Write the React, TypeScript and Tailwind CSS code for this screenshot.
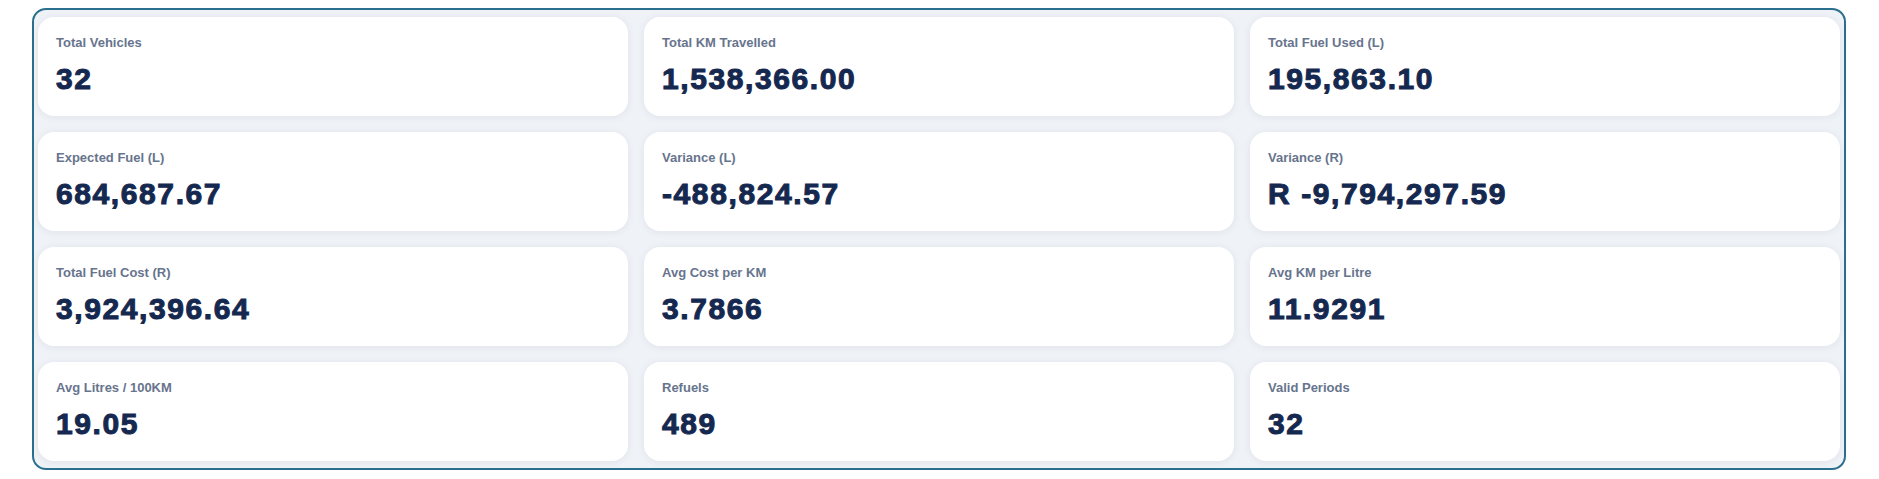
import React from 'react';

interface Stat {
  label: string;
  value: string;
}

const stats: Stat[] = [
  { label: 'Total Vehicles', value: '32' },
  { label: 'Total KM Travelled', value: '1,538,366.00' },
  { label: 'Total Fuel Used (L)', value: '195,863.10' },
  { label: 'Expected Fuel (L)', value: '684,687.67' },
  { label: 'Variance (L)', value: '-488,824.57' },
  { label: 'Variance (R)', value: 'R -9,794,297.59' },
  { label: 'Total Fuel Cost (R)', value: '3,924,396.64' },
  { label: 'Avg Cost per KM', value: '3.7866' },
  { label: 'Avg KM per Litre', value: '11.9291' },
  { label: 'Avg Litres / 100KM', value: '19.05' },
  { label: 'Refuels', value: '489' },
  { label: 'Valid Periods', value: '32' },
];

const StatCard: React.FC<Stat> = ({ label, value }) => (
  <div className="bg-white rounded-2xl h-[99px] pl-[18px] pr-4 pt-[17px] pb-[19px] shadow-[0_1px_8px_rgba(30,41,59,0.07)]">
    <div className="text-[13px] leading-[18px] font-semibold text-[#67748d]">{label}</div>
    <div className="mt-[9px] text-[30px] leading-9 font-bold text-[#15284f] tracking-[1.6px] [-webkit-text-stroke:1px_#15284f]">
      {value}
    </div>
  </div>
);

export default function App() {
  return (
    <div className="bg-white w-[1879px] h-[479px] pt-2 pl-8 font-['Liberation_Sans',Arial,sans-serif]">
      <div className="w-[1814px] border-2 border-[#2b6f8f] rounded-[14px] bg-[#eff2f7] px-1 py-[7px]">
        <div className="grid grid-cols-3 gap-4">
          {stats.map(s => (
            <StatCard key={s.label} label={s.label} value={s.value} />
          ))}
        </div>
      </div>
    </div>
  );
}
